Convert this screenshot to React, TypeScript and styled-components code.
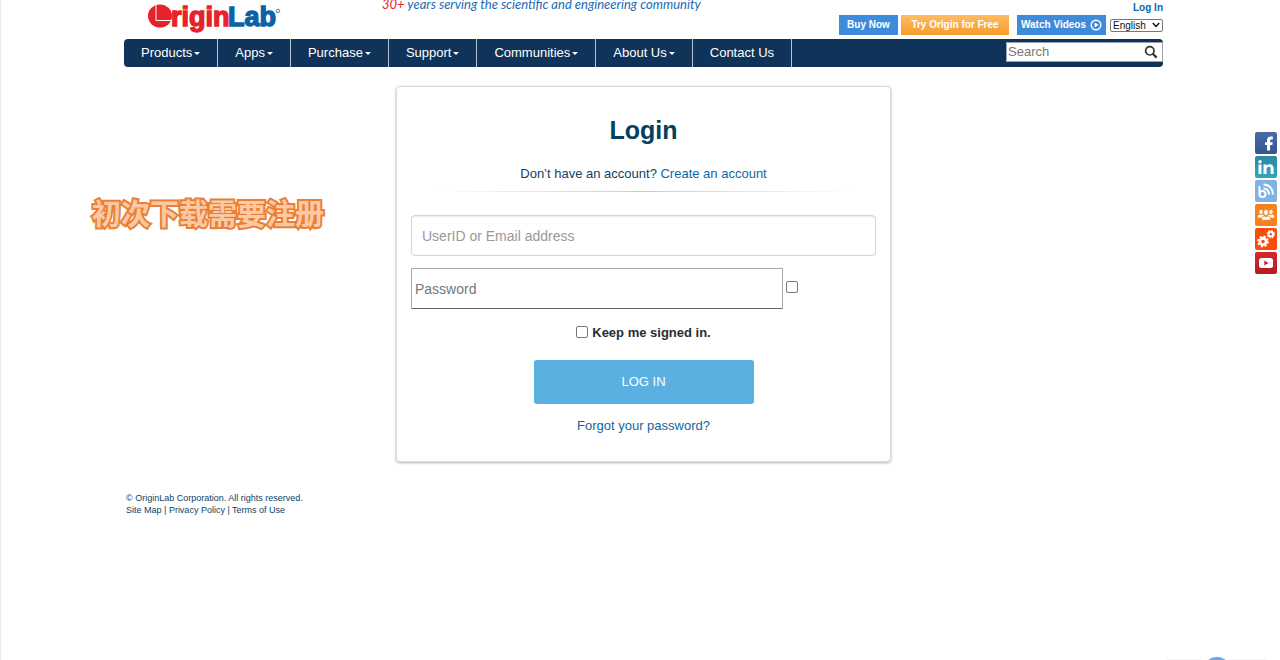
import React from "react";
import styled, { createGlobalStyle } from "styled-components";

const GlobalStyle = createGlobalStyle`
  *, *::before, *::after { box-sizing: border-box; }
  html { background: #fff; }
  body {
    margin: 0;
    font-family: "Liberation Sans", Arial, sans-serif;
    font-size: 13px;
    line-height: 20px;
    color: #0b4366;
  }
  a { color: #0d67a5; text-decoration: none; }
`;

const Page = styled.div`
  min-height: 100vh;
  border-left: 1px solid #ebebeb;
  padding: 0 17px 0 23px;
`;

const Container = styled.div`
  max-width: 1039px;
  margin: 0 auto;
`;

const Header = styled.header`
  display: flex;
  justify-content: space-between;
  height: 39px;
`;

const Brand = styled.div`
  display: flex;
  align-items: flex-start;
  gap: 99px;
  padding-left: 23px;
`;

const LogoLink = styled.a`
  display: block;
  height: 36px;
`;

const Tagline = styled.p`
  margin: 0;
  font-family: "Lato", sans-serif;
  font-size: 13px;
  font-style: italic;
  line-height: 8px;
  color: #1a6ab0;
  white-space: nowrap;
`;

const Years = styled.span`
  color: #e8252b;
`;

const Tools = styled.div`
  display: flex;
  flex-direction: column;
  align-items: flex-end;
`;

const LoginLink = styled.a`
  font-size: 10px;
  font-weight: bold;
  line-height: 15px;
`;

const Actions = styled.div`
  display: flex;
  align-items: center;
  height: 20px;
`;

const ActionButton = styled.button<{ $tone?: "orange"; $width: number; $gap: number }>`
  display: flex;
  align-items: center;
  justify-content: center;
  gap: 4px;
  width: ${(p) => p.$width}px;
  height: 20px;
  margin: 0 ${(p) => p.$gap}px 0 0;
  padding: 0;
  border: 0;
  font: bold 10px/20px "Liberation Sans", Arial, sans-serif;
  color: #fff;
  white-space: nowrap;
  background: ${(p) =>
    p.$tone === "orange" ? "linear-gradient(#fdbd62, #f89b2d)" : "#3f8bdb"};
`;

const LanguageBox = styled.div`
  display: grid;
  align-items: center;
  width: 53px;
  > * { grid-area: 1 / 1; }
  > svg { justify-self: end; margin-right: 3px; pointer-events: none; }
`;

const Language = styled.select`
  appearance: none;
  width: 100%;
  height: 13px;
  margin: 0;
  padding: 0 0 0 2px;
  border: 1px solid #767676;
  border-radius: 2px;
  background: #fff;
  color: #111;
  font: 10px/11px "Liberation Sans", Arial, sans-serif;
`;

const Nav = styled.nav`
  display: flex;
  height: 28px;
  border-radius: 4px;
  background: #0f3359;
`;

const NavLink = styled.a`
  display: flex;
  align-items: center;
  gap: 2px;
  padding: 0 17px;
  border-right: 1px solid #b9c4d0;
  color: #fff;
  line-height: 28px;
  white-space: nowrap;
`;

const Caret = styled.span`
  border: 3px solid transparent;
  border-top-color: #fff;
  border-bottom: 0;
`;

const Search = styled.form`
  display: flex;
  align-items: center;
  width: 157px;
  height: 20px;
  margin: 3px 0 0 auto;
  padding-right: 4px;
  border: 1px solid #9aa3ad;
  background: #fff;
`;

const SearchInput = styled.input`
  flex: 1;
  min-width: 0;
  padding: 0 1px;
  border: 0;
  outline: 0;
  background: transparent;
  font: 13px/16px "Liberation Sans", Arial, sans-serif;
  &::placeholder { color: #777; opacity: 1; }
`;

const IconButton = styled.button`
  display: flex;
  padding: 0;
  border: 0;
  background: none;
`;

const Card = styled.main`
  display: flex;
  flex-direction: column;
  align-items: center;
  max-width: 495px;
  margin: 19px auto 0;
  padding: 27px 14px 25px;
  border: 1px solid #d9d9d9;
  border-radius: 4px;
  box-shadow: 0 1px 3px rgba(0, 0, 0, 0.3);
`;

const Title = styled.h1`
  margin: 0;
  font-size: 25px;
  line-height: 32px;
  color: #04405f;
`;

const SignupLine = styled.p`
  margin: 18px 0 0;
  line-height: 20px;
`;

const Divider = styled.hr`
  width: 420px;
  max-width: 100%;
  height: 1px;
  margin: 7px 0 23px;
  border: 0;
  background: linear-gradient(to right, transparent, #ccc, transparent);
`;

const LoginForm = styled.form`
  display: flex;
  flex-direction: column;
  align-items: center;
  width: 100%;
`;

const UserInput = styled.input`
  width: 100%;
  height: 41px;
  padding: 0 10px;
  border: 1px solid #d4d4d4;
  border-radius: 4px;
  box-shadow: inset 0 1px 1px rgba(0, 0, 0, 0.08);
  font: 14px/20px "Liberation Sans", Arial, sans-serif;
  &::placeholder { color: #999; opacity: 1; }
`;

const PasswordRow = styled.div`
  display: flex;
  align-items: center;
  gap: 3px;
  width: 100%;
  margin-top: 12px;
`;

const PasswordInput = styled.input`
  width: 80%;
  height: 41px;
  padding: 0 3px;
  border: 1px solid #aaa;
  border-bottom-color: #666;
  border-radius: 1px;
  font: 14px/20px "Liberation Sans", Arial, sans-serif;
  &::placeholder { color: #777; opacity: 1; }
`;

const Checkbox = styled.input`
  appearance: none;
  flex: none;
  width: 12px;
  height: 12px;
  margin: 0 0 3px;
  border: 1px solid #767676;
  border-radius: 2px;
  background: #fff;
  &:checked { background: #0d67a5; }
`;

const KeepLabel = styled.label`
  display: flex;
  align-items: center;
  gap: 4px;
  margin-top: 14px;
  font-weight: bold;
  line-height: 20px;
  color: #2b2b33;
`;

const SubmitButton = styled.button`
  width: 220px;
  height: 44px;
  margin: 17px 0 12px;
  border: 0;
  border-radius: 3px;
  background: #5ab1e1;
  color: #fff;
  font: 13px/20px "Liberation Sans", Arial, sans-serif;
`;

const Footer = styled.footer`
  padding: 30px 2px 0;
  font-size: 9px;
  line-height: 12px;
  a { color: inherit; }
`;

const Note = styled.div`
  position: absolute;
  top: 193px;
  left: 92px;
  font: 700 29px/38px "Noto Sans CJK SC", sans-serif;
  color: #fbc9a3;
  -webkit-text-stroke: 4px #ea7f35;
  paint-order: stroke fill;
  stroke-linejoin: round;
  white-space: nowrap;
`;

const Social = styled.aside`
  position: fixed;
  top: 132px;
  right: 3px;
  display: grid;
  gap: 2px;
`;

const SocialLink = styled.a<{ $bg: string }>`
  display: block;
  width: 22px;
  height: 22px;
  border-radius: 2px;
  background: ${(p) => p.$bg};
  svg { display: block; }
`;

const Assistant = styled.div`
  position: fixed;
  right: 3px;
  bottom: 0;
  height: 5px;
  svg { display: block; }
`;

const Logo = () => (
  <svg width="136" height="36" viewBox="0 0 136 36" role="img" aria-label="OriginLab">
    <ellipse cx="13" cy="16" rx="12" ry="11.5" fill="#e8222b" />
    <path d="M9 5v15.5H25" fill="none" stroke="#fff" strokeWidth="1" />
    <g
      fontFamily="Liberation Sans, Arial, sans-serif"
      fontSize="27"
      fontWeight="bold"
      strokeWidth="1.4"
    >
      <text x="24" y="26" fill="#e8222b" stroke="#e8222b">rigin</text>
      <text x="81" y="26" fill="#0c62a8" stroke="#0c62a8">Lab</text>
    </g>
    <circle cx="131" cy="11" r="1.8" fill="none" stroke="#4f8fc4" />
    <circle cx="131" cy="11" r="0.6" fill="#4f8fc4" />
  </svg>
);

const PlayIcon = () => (
  <svg width="12" height="12" viewBox="0 0 12 12" aria-hidden="true">
    <circle cx="6" cy="6" r="4.8" fill="none" stroke="#fff" strokeWidth="1.4" />
    <path d="M4.6 3.4v5.2L8.6 6z" fill="#fff" />
  </svg>
);

const ChevronIcon = () => (
  <svg width="8" height="6" viewBox="0 0 8 6" aria-hidden="true">
    <path d="M0.8 1l3.200 3.400L7.200 1" fill="none" stroke="#111" strokeWidth="1.500" />
  </svg>
);

const SearchIcon = () => (
  <svg width="14" height="14" viewBox="0 0 14 14" aria-hidden="true">
    <circle cx="5.8" cy="5.8" r="4.2" fill="none" stroke="#333" strokeWidth="1.7" />
    <path d="M8.8 8.8l3.8 3.8" stroke="#333" strokeWidth="2.2" />
  </svg>
);

const Person = ({ x, y, s }: { x: number; y: number; s: number }) => (
  <g transform={`translate(${x} ${y}) scale(${s})`} fill="#fff">
    <ellipse cx="0" cy="0" rx="2.2" ry="2.7" />
    <path d="M-4 7.2V5.4C-4 4-2.6 3.8-1.2 3.2L0 4.4 1.2 3.2C2.6 3.8 4 4 4 5.4v1.8z" />
  </g>
);

const Gear = ({ x, y, r }: { x: number; y: number; r: number }) => (
  <g transform={`translate(${x} ${y})`} fill="none" stroke="#fff">
    <circle r={r} strokeWidth={r * 0.9} />
    <circle r={r * 1.6} strokeWidth={r * 0.5} strokeDasharray={`${r * 0.63} ${r * 0.626}`} />
  </g>
);

const socials = [
  {
    name: "Facebook",
    bg: "linear-gradient(#4a6ba6, #34558f)",
    art: <path d="M12 18.500v-5.400H10v-2.800h2V8.600c0-2.800 1.400-4.100 3.900-4.100h1.900v2.900h-1.300c-1 0-1.400.4-1.400 1.300v1.600h2.600l-.4 2.800h-2.200v5.400z" fill="#fff" />,
  },
  {
    name: "LinkedIn",
    bg: "linear-gradient(#2c87a2, #35a5bd)",
    art: (
      <g fill="#fff">
        <path d="M3.5 8.5h3V18h-3zM8.5 8.5h2.9v1.3c.7-1 1.8-1.6 3.2-1.6 2.8 0 4 1.6 4 4.4V18h-3v-4.9c0-1.5-.5-2.3-1.8-2.3-1.4 0-2.2.9-2.2 2.4V18H8.5z" />
        <circle cx="5" cy="5.7" r="1.7" />
      </g>
    ),
  },
  {
    name: "Blog",
    bg: "#80b2e5",
    art: (
      <g fill="none" stroke="#fff" strokeWidth="2">
        <path d="M4.500 6v8" />
        <circle cx="7.5" cy="14" r="3" />
        <path d="M8.500 8.500c3.400 0 5.500 2.600 5.500 6M8.500 4.500c5.600 0 9.500 4.400 9.500 10" />
      </g>
    ),
  },
  {
    name: "User forum",
    bg: "#f5811f",
    art: (
      <>
        <Person x={6} y={8} s={0.8} />
        <Person x={16} y={8} s={0.8} />
        <g stroke="#f5811f" strokeWidth="0.7"><Person x={11} y={8.4} s={1.1} /></g>
      </>
    ),
  },
  {
    name: "File exchange",
    bg: "#fb4b0b",
    art: <><Gear x={8} y={13.5} r={3.2} /><Gear x={15.8} y={6.2} r={2.3} /></>,
  },
  {
    name: "YouTube",
    bg: "linear-gradient(#d7262d, #b71b22)",
    art: (
      <>
        <rect x="4" y="6" width="14" height="10" rx="2.5" fill="#fff" />
        <path d="M9.300 8.500v5l4.200-2.500z" fill="#c8202a" />
      </>
    ),
  },
];

const menu = ["Products", "Apps", "Purchase", "Support", "Communities", "About Us"];

export default function App() {
  return (
    <Page>
      <GlobalStyle />
      <Container>
        <Header>
          <Brand>
            <LogoLink href="#home"><Logo /></LogoLink>
            <Tagline>
              <Years>30+</Years> years serving the scientific and engineering community
            </Tagline>
          </Brand>
          <Tools>
            <LoginLink href="#login">Log In</LoginLink>
            <Actions>
              <ActionButton $width={59} $gap={3}>Buy Now</ActionButton>
              <ActionButton $width={108} $gap={8} $tone="orange">Try Origin for Free</ActionButton>
              <ActionButton $width={89} $gap={4}>Watch Videos <PlayIcon /></ActionButton>
              <LanguageBox>
                <Language aria-label="Language" defaultValue="English">
                  <option>English</option>
                </Language>
                <ChevronIcon />
              </LanguageBox>
            </Actions>
          </Tools>
        </Header>
        <Nav aria-label="Main">
          {menu.map((item) => (
            <NavLink key={item} href="#menu">{item}<Caret /></NavLink>
          ))}
          <NavLink href="#contact">Contact Us</NavLink>
          <Search role="search">
            <SearchInput type="text" placeholder="Search" aria-label="Search" />
            <IconButton type="button" aria-label="Submit search"><SearchIcon /></IconButton>
          </Search>
        </Nav>
        <Card>
          <Title>Login</Title>
          <SignupLine>
            Don’t have an account? <a href="#create">Create an account</a>
          </SignupLine>
          <Divider />
          <LoginForm>
            <UserInput type="text" placeholder="UserID or Email address" aria-label="UserID or Email address" />
            <PasswordRow>
              <PasswordInput type="password" placeholder="Password" aria-label="Password" />
              <Checkbox type="checkbox" aria-label="Show password" />
            </PasswordRow>
            <KeepLabel><Checkbox type="checkbox" />Keep me signed in.</KeepLabel>
            <SubmitButton type="button">LOG IN</SubmitButton>
          </LoginForm>
          <a href="#forgot">Forgot your password?</a>
        </Card>
        <Footer>
          <div>© OriginLab Corporation. All rights reserved.</div>
          <div>
            <a href="#map">Site Map</a> | <a href="#privacy">Privacy Policy</a> | <a href="#terms">Terms of Use</a>
          </div>
        </Footer>
      </Container>
      <Note>初次下载需要注册</Note>
      <Social aria-label="Social media">
        {socials.map((s) => (
          <SocialLink key={s.name} href="#social" aria-label={s.name} $bg={s.bg}>
            <svg width="22" height="22" viewBox="0 0 22 22" aria-hidden="true">{s.art}</svg>
          </SocialLink>
        ))}
      </Social>
      <Assistant>
        <svg width="120" height="5" viewBox="0 0 120 5" aria-hidden="true">
          <path d="M10 4.500h34M72 4.500h38" stroke="#f6f6f6" />
          <circle cx="60" cy="18" r="16" fill="#fff" stroke="#e6eaef" />
          <circle cx="60" cy="16" r="14" fill="#6aa5ea" />
        </svg>
      </Assistant>
    </Page>
  );
}
